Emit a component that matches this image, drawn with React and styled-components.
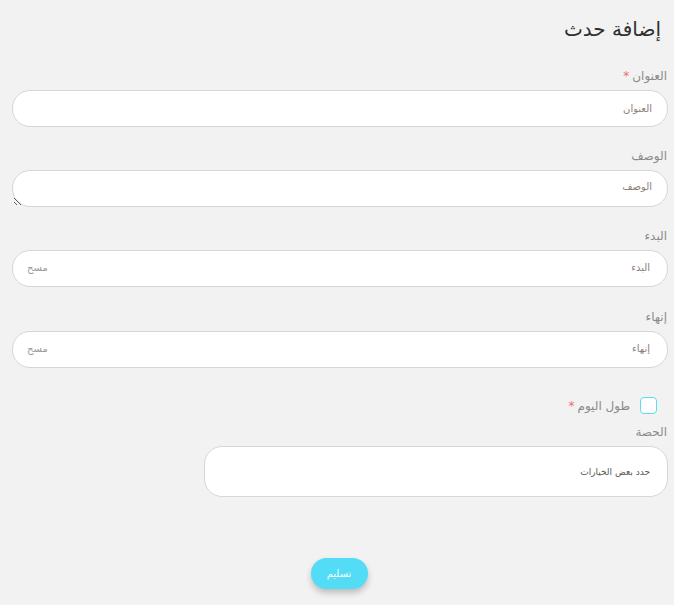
import React from "react";
import styled, { createGlobalStyle } from "styled-components";

const GlobalStyle = createGlobalStyle`
  html, body {
    margin: 0;
    padding: 0;
    background: #f2f2f2;
  }
  body {
    font-family: "DejaVu Sans", "Noto Sans", sans-serif;
  }
  * {
    box-sizing: border-box;
  }
`;

const Page = styled.form`
  direction: rtl;
  padding: 14px 6px 16px 6px;
  min-height: 605px;
`;

const Title = styled.h2`
  margin: 0 7px 24px 0;
  font-size: 20px;
  line-height: 30px;
  font-weight: normal;
  color: #2f2f2f;
`;

const Field = styled.div`
  margin-bottom: ${(p) => p.gap ?? 21}px;
`;

const Label = styled.label`
  display: block;
  margin: 0 1px 6px 0;
  font-size: 12px;
  line-height: 16px;
  color: #8b8b8b;
`;

const Star = styled.span`
  color: #ee6f6f;
  margin-right: 3px;
`;

const Input = styled.input`
  display: block;
  width: calc(100% - 6px);
  height: 37px;
  padding: 0 15px;
  border: 1px solid #d6d6d6;
  border-radius: 18px;
  background: #fff;
  font-family: inherit;
  font-size: 10px;
  color: #444;
  outline: none;
  &::placeholder {
    color: #8e8078;
  }
`;

const TextArea = styled.textarea`
  display: block;
  width: calc(100% - 6px);
  height: 37px;
  padding: 10px 15px;
  border: 1px solid #d6d6d6;
  border-radius: 18px;
  background: #fff;
  font-family: inherit;
  font-size: 10px;
  color: #444;
  outline: none;
  &::placeholder {
    color: #8e8078;
  }
`;

const DateBox = styled.div`
  display: flex;
  align-items: center;
  width: calc(100% - 6px);
  height: 37px;
  padding: 0 15px 2px 14px;
  border: 1px solid #d6d6d6;
  border-radius: 18px;
  background: #fff;
`;

const DateInput = styled.input`
  flex: 1;
  border: none;
  outline: none;
  background: transparent;
  font-family: inherit;
  font-size: 10px;
  &::placeholder {
    color: #8e8078;
  }
`;

const Clear = styled.span`
  font-size: 10px;
  color: #9a9a9a;
  cursor: pointer;
`;

const CheckRow = styled.div`
  display: flex;
  align-items: center;
  gap: 10px;
  margin: 29px 11px 10px 0;
`;

const Box = styled.span`
  width: 17px;
  height: 17px;
  border: 1.5px solid #5adcf2;
  border-radius: 4px;
  background: #fff;
`;

const CheckLabel = styled.span`
  font-size: 12px;
  color: #8b8b8b;
`;

const Select = styled.div`
  display: flex;
  align-items: center;
  width: 464px;
  height: 51px;
  padding: 0 17px;
  border: 1px solid #d6d6d6;
  border-radius: 18px;
  background: #fff;
  font-size: 9px;
  color: #555;
`;

const Actions = styled.div`
  display: flex;
  justify-content: center;
  margin-top: 61px;
  padding-left: 4px;
`;

const Submit = styled.button`
  width: 57px;
  height: 31px;
  border: none;
  border-radius: 16px;
  background: #52dcf5;
  color: #fff;
  font-family: inherit;
  font-size: 10px;
  box-shadow: 0 4px 6px rgba(0, 0, 0, 0.22);
  cursor: pointer;
`;

const App = () => {
  return (
    <>
      <GlobalStyle />
      <Page onSubmit={(e) => e.preventDefault()}>
        <Title>إضافة حدث</Title>

        <Field>
          <Label>
            العنوان<Star>*</Star>
          </Label>
          <Input placeholder="العنوان" />
        </Field>

        <Field>
          <Label>الوصف</Label>
          <TextArea placeholder="الوصف" />
        </Field>

        <Field gap={22}>
          <Label>البدء</Label>
          <DateBox>
            <DateInput placeholder="البدء" />
            <Clear>مسح</Clear>
          </DateBox>
        </Field>

        <Field gap={0}>
          <Label>إنهاء</Label>
          <DateBox>
            <DateInput placeholder="إنهاء" />
            <Clear>مسح</Clear>
          </DateBox>
        </Field>

        <CheckRow>
          <Box />
          <CheckLabel>
            طول اليوم<Star>*</Star>
          </CheckLabel>
        </CheckRow>

        <Field gap={0}>
          <Label>الحصة</Label>
          <Select>حدد بعض الخيارات</Select>
        </Field>

        <Actions>
          <Submit type="submit">تسليم</Submit>
        </Actions>
      </Page>
    </>
  );
};

export default App;
